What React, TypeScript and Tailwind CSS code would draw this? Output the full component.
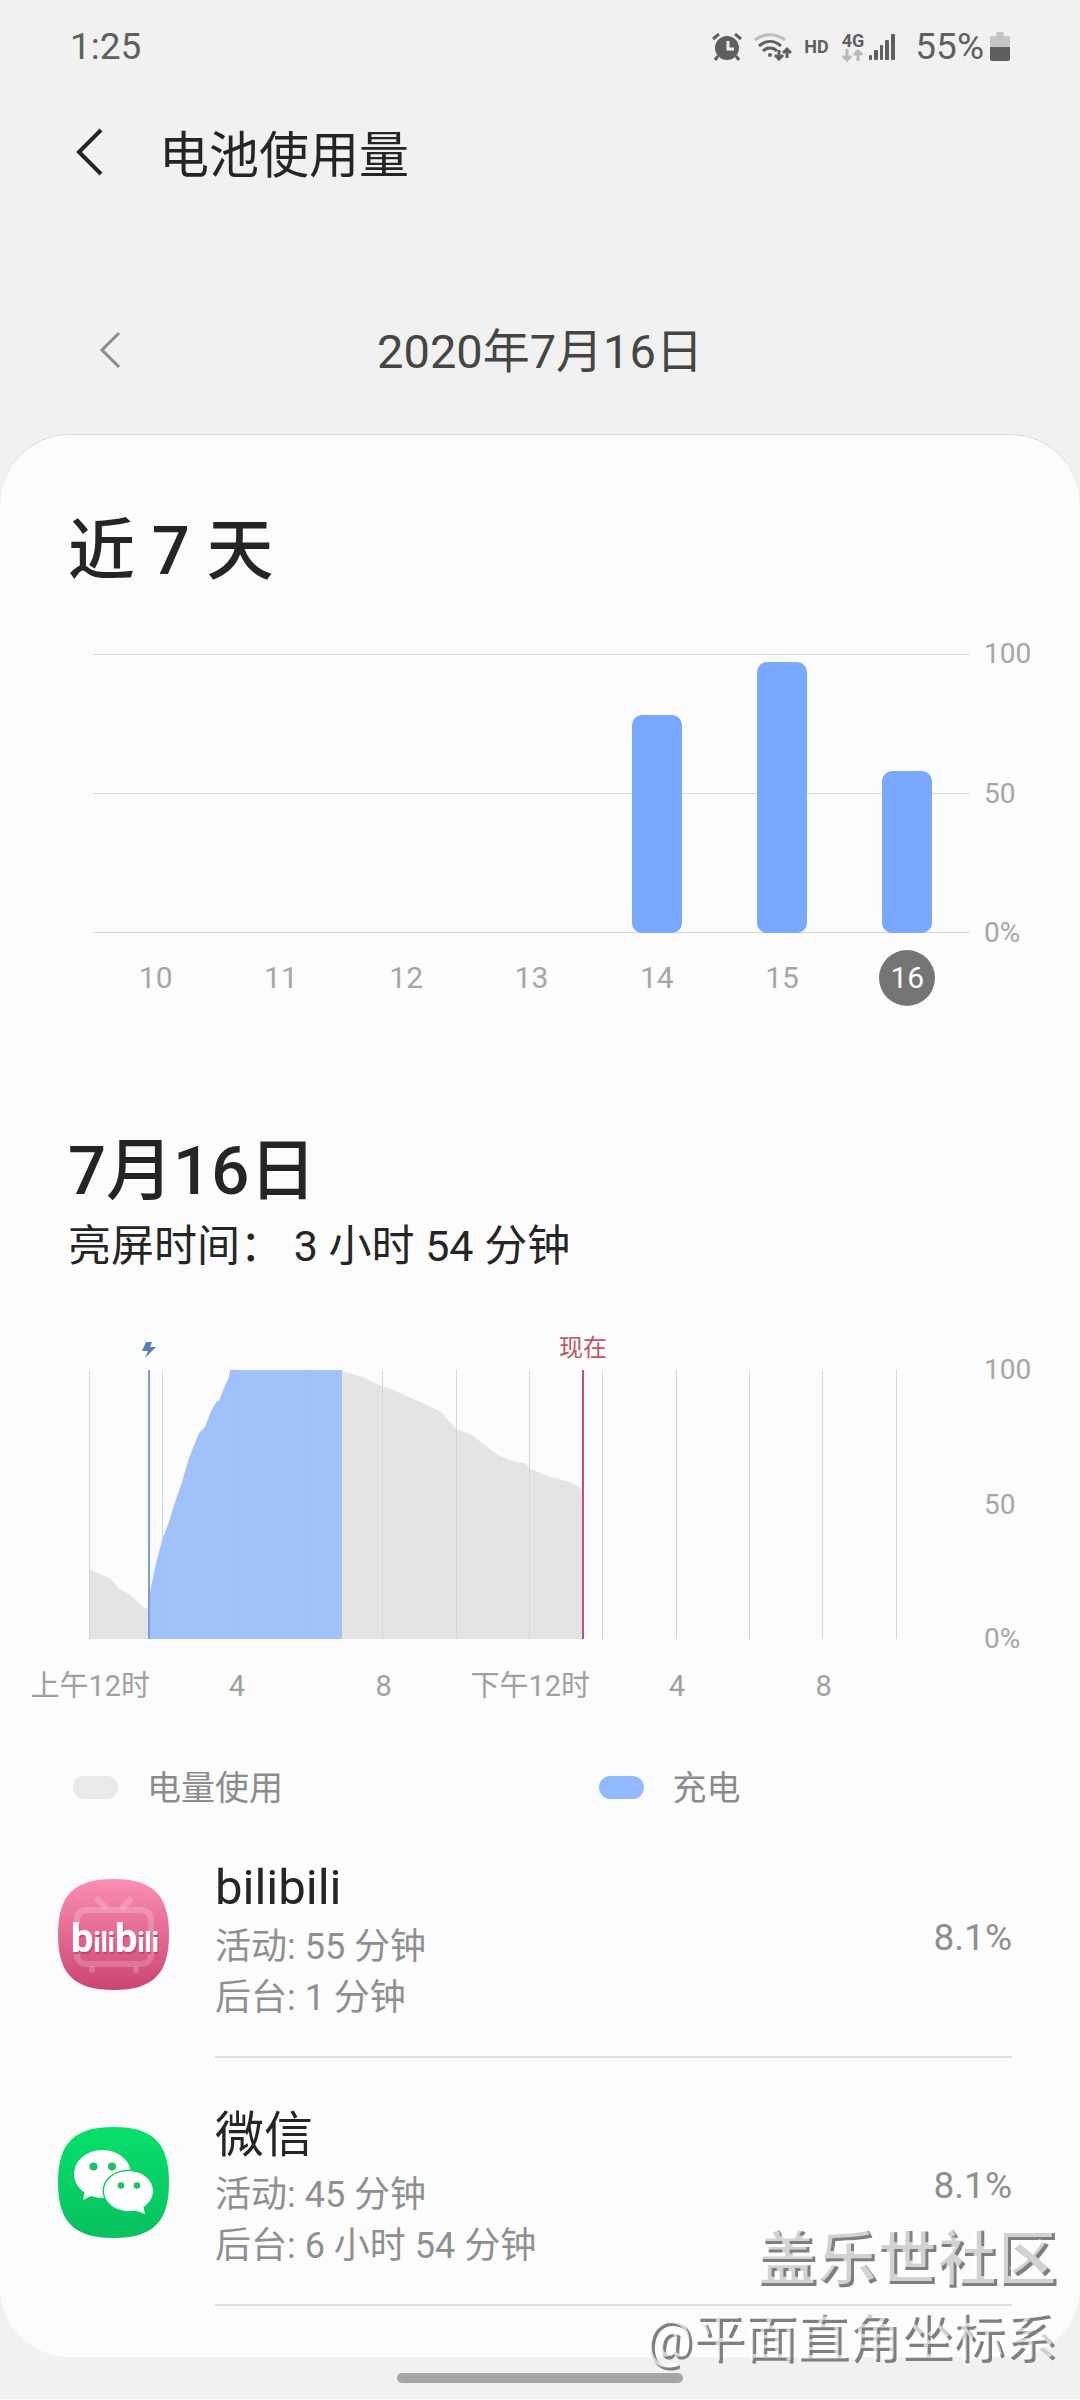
import { useState } from 'react';
import type { ReactNode } from 'react';

type Day = { day: number; level: number };

type AppUsage = {
  name: string;
  active: string;
  background: string;
  share: string;
  icon: ReactNode;
};

const DAYS: Day[] = [
  { day: 10, level: 0 },
  { day: 11, level: 0 },
  { day: 12, level: 0 },
  { day: 13, level: 0 },
  { day: 14, level: 78 },
  { day: 15, level: 97 },
  { day: 16, level: 58 },
];

const HOURS = ['上午12时', '4', '8', '下午12时', '4', '8'];

// x positions on the 880 wide day chart
const CHART_W = 880;
const CHART_H = 269;
const CHARGE_X = 60;
const NOW_X = 494;

const DRAIN_NIGHT = '0,199 22,209 29,218 41,225 51,234 55,238 60,239 60,269 0,269';
const CHARGE =
  '60,237 61,222 67,193 74,167 80,152 85,135 93,112 95,105 100,88 110,63 116,57 122,41 128,31 130,31 134,20 140,7 141,0 253,0 253,269 60,269';
const DRAIN_DAY =
  '253,1 274,7 294,17 302,19 322,28 340,36 352,42 367,59 383,65 393,73 409,85 423,91 436,93 441,99 462,107 480,112 490,117 494,121 494,269 253,269';

export default function BatteryUsagePage() {
  const [selected, setSelected] = useState(16);

  return (
    <div className="relative bg-[#f1f1f1] font-['Roboto','Noto_Sans_CJK_SC',sans-serif] text-[#252525]">
      <StatusBar />

      <header className="flex h-[124px] items-center">
        <button aria-label="返回" className="ml-[64px] mr-[47px] h-14 w-12">
          <svg viewBox="0 0 48 56" className="h-14 w-12" fill="none" stroke="#252525" strokeWidth="4">
            <path d="M37 2 15 24l22 22" />
          </svg>
        </button>
        <h1 className="text-[50px] leading-[60px]">电池使用量</h1>
      </header>

      <div className="grid grid-cols-[1fr_auto_1fr] items-center pb-[50px] pt-[102px]">
        <button aria-label="前一天" className="ml-[88px] h-12 w-12">
          <svg viewBox="0 0 48 48" className="h-12 w-12" fill="none" stroke="#8c8c8c" strokeWidth="3">
            <path d="M31 5 14 22l17 17" />
          </svg>
        </button>
        <div className="text-[47px] leading-[64px] text-[#454545]">2020年7月16日</div>
      </div>

      <main className="rounded-[70px] border-t border-[#d8d8d8] bg-[#fcfcfc] pb-[51px] pt-[76px]">
        <h2 className="px-[68px] text-[67px] font-medium leading-[80px]">近 7 天</h2>
        <WeekChart selected={selected} onSelect={setSelected} />

        <h2 className="mt-[125px] px-[68px] text-[67px] font-medium leading-[80px]">7月16日</h2>
        <p className="mt-[5px] px-[68px] text-[43px] leading-[60px]">亮屏时间： 3 小时 54 分钟</p>
        <DayChart />

        <div className="mt-[56px] grid h-12 grid-cols-2 items-center pl-[73px] text-[34px] leading-[48px] text-[#8c8c8c]">
          <div className="flex items-center gap-[29px]">
            <span className="h-[23px] w-[45px] rounded-full bg-[#e9e9e9]" />
            <span className="pt-[2px]">电量使用</span>
          </div>
          <div className="flex items-center gap-[29px] pl-[22px]">
            <span className="h-[23px] w-[45px] rounded-full bg-[#93baff]" />
            <span className="pt-[2px]">充电</span>
          </div>
        </div>

        <ul>
          {APPS.map((app) => (
            <li key={app.name} className="flex items-start pl-[58px] pr-[68px] pt-12">
              <div className="mt-[21px] h-[111px] w-[111px]">{app.icon}</div>
              <div className="ml-[46px] flex flex-1 items-start justify-between border-b-2 border-[#dedede] pb-[32px]">
                <div>
                  <div className="mb-[4px] text-[49px] leading-[60px]">{app.name}</div>
                  <div className="text-[36px] leading-[51px] text-[#8f8f8f]">活动: {app.active}</div>
                  <div className="text-[36px] leading-[51px] text-[#8f8f8f]">后台: {app.background}</div>
                </div>
                <div className="mt-[54px] text-[37px] leading-[51px] text-[#8f8f8f]">{app.share}</div>
              </div>
            </li>
          ))}
        </ul>
      </main>

      {/* Gesture bar */}
      <div className="flex justify-center py-4">
        <div className="h-[10px] w-[286px] rounded-full bg-[#a6a6a6]" />
      </div>

      {/* Watermark */}
      <div className="pointer-events-none absolute bottom-[20px] right-[24px] text-right leading-[80px] text-white/65 [text-shadow:3px_3px_0_#7f7f7f]">
        <div className="text-[60px] font-bold">盖乐世社区</div>
        <div className="text-[52px]">@平面直角坐标系</div>
      </div>
    </div>
  );
}

function StatusBar() {
  return (
    <div className="flex h-[94px] items-center justify-between pl-[70px] pr-[70px] text-[37px] leading-[44px] text-[#5f5f5f]">
      <span>1:25</span>
      <div className="flex items-center">
        {/* Alarm */}
        <svg viewBox="0 0 30 28" className="mr-[12px] h-7 w-[30px]" fill="none" stroke="#5f5f5f">
          <circle cx="15" cy="15" r="12" fill="#5f5f5f" stroke="none" />
          <path d="M1 6 7 1M29 6l-6-5M6 23l-3 4M24 23l3 4" strokeWidth="3" />
          <path d="M16 8v8h6" stroke="#f1f1f1" strokeWidth="3" />
        </svg>
        {/* Wi-Fi */}
        <svg viewBox="0 0 38 28" className="mr-[12px] h-7 w-[38px]" fill="none" strokeWidth="3">
          <path d="M1 7c9-7 21-7 30 0" stroke="#bdbdbd" />
          <path d="M5 13c7-6 15-6 22 0M9 18c4-4 10-4 14 0" stroke="#5f5f5f" />
          <circle cx="16" cy="22" r="2" fill="#5f5f5f" />
          <path
            d="M25 17v9M21 22l4 4 4-4M33 25v-9M29 20l4-4 4 4"
            stroke="#5f5f5f"
            strokeWidth="3"
          />
        </svg>
        <span className="mr-[13px] text-[18px] font-bold leading-[24px]">HD</span>
        <div className="mr-[5px] flex flex-col">
          <span className="text-[18px] font-bold leading-[16px]">4G</span>
          <svg viewBox="0 0 22 13" className="h-[13px] w-[22px]" fill="none" stroke="#b9b9b9" strokeWidth="3">
            <path d="M5 0v11M1 7l4 4 4-4M16 12V2M12 6l4-4 4 4" />
          </svg>
        </div>
        <svg viewBox="0 0 26 26" className="mr-[20px] h-[26px] w-[26px]" fill="#5f5f5f">
          <rect x="0" y="21" width="3" height="5" rx="1" />
          <rect x="5" y="16" width="4" height="10" rx="1" />
          <rect x="11" y="11" width="3" height="15" rx="1" />
          <rect x="16" y="6" width="4" height="20" rx="1" />
          <rect x="22" y="0" width="4" height="26" rx="1" />
        </svg>
        <span className="mr-[6px]">55%</span>
        <svg viewBox="0 0 20 30" className="h-[30px] w-[20px]">
          <path d="M2 4h4V2q0-2 2-2h4q2 0 2 2v2h4q2 0 2 2v10H0V6q0-2 2-2z" fill="#c4c4c4" />
          <path d="M0 15h20v12q0 2-2 2H2q-2 0-2-2z" fill="#5f5f5f" />
        </svg>
      </div>
    </div>
  );
}

function Scale() {
  return (
    <div className="-my-[14px] ml-[14px] flex w-[96px] flex-col justify-between text-[28px] leading-[28px] text-[#a6a6a6]">
      <span>100</span>
      <span>50</span>
      <span>0%</span>
    </div>
  );
}

function WeekChart({ selected, onSelect }: { selected: number; onSelect: (day: number) => void }) {
  return (
    <div className="mt-[63px] pl-[93px]">
      <div className="flex h-[279px]">
        <div className="grid flex-1">
          <div className="col-start-1 row-start-1 flex flex-col justify-between">
            <div className="h-px bg-[#d8d8d8]" />
            <div className="h-px bg-[#d8d8d8]" />
            <div className="h-px bg-[#d8d8d8]" />
          </div>
          <div className="col-start-1 row-start-1 grid grid-cols-7">
            {DAYS.map((d) => (
              <div key={d.day} className="flex items-end justify-center">
                <div className="w-[50px] rounded-[10px] bg-[#78a9ff]" style={{ height: `${d.level}%` }} />
              </div>
            ))}
          </div>
        </div>
        <Scale />
      </div>

      <div className="mr-[110px] mt-[17px] grid grid-cols-7 justify-items-center">
        {DAYS.map((d) => (
          <button
            key={d.day}
            onClick={() => onSelect(d.day)}
            className={`h-14 w-14 rounded-full text-[30px] leading-[56px] ${
              d.day === selected ? 'bg-[#757575] text-white' : 'text-[#a6a6a6]'
            }`}
          >
            {d.day}
          </button>
        ))}
      </div>
    </div>
  );
}

function DayChart() {
  return (
    <div className="mt-[56px]">
      <div className="flex pl-[89px] pt-[38px]">
        <div className="relative h-[269px] flex-1">
          <svg
            viewBox={`0 0 ${CHART_W} ${CHART_H}`}
            preserveAspectRatio="none"
            className="block h-[269px] w-full"
          >
            <polygon points={DRAIN_NIGHT} fill="#e4e4e4" />
            <polygon points={DRAIN_DAY} fill="#e4e4e4" />
            {Array.from({ length: 12 }, (_, i) => (
              <rect key={i} x={Math.round((i * CHART_W) / 12)} y="0" width="1" height={CHART_H} fill="#d6d6d6" />
            ))}
            <polygon points={CHARGE} fill="#9bbefa" fillOpacity="0.95" />
            <rect x={CHARGE_X - 1} y="0" width="2" height={CHART_H} fill="#7c9fd3" />
            <rect x={NOW_X - 1} y="0" width="2" height={CHART_H} fill="#c25469" />
          </svg>

          {/* Marker labels */}
          <svg
            viewBox="0 0 14 16"
            className="absolute -top-7 h-4 w-[14px] -translate-x-1/2"
            style={{ left: `${(CHARGE_X / CHART_W) * 100}%` }}
            fill="#5180ba"
          >
            <path d="M4 0h6L8 5h6L3 16l3-7H0z" />
          </svg>
          <span
            className="absolute -top-[38px] -translate-x-1/2 whitespace-nowrap text-[24px] leading-[32px] text-[#c25469]"
            style={{ left: `${(NOW_X / CHART_W) * 100}%` }}
          >
            现在
          </span>
        </div>
        <div className="flex w-[111px]">
          <div className="w-px" />
          <Scale />
        </div>
      </div>

      <div className="ml-[17px] mr-[183px] mt-[27px] grid grid-cols-6 text-center text-[29px] leading-[40px] text-[#a0a0a0]">
        {HOURS.map((h, i) => (
          <span key={i} className="whitespace-nowrap">
            {h}
          </span>
        ))}
      </div>
    </div>
  );
}

function BilibiliIcon() {
  return (
    <svg viewBox="0 0 111 111" className="h-full w-full">
      <defs>
        <linearGradient id="bili" x1="0" y1="0" x2="0" y2="1">
          <stop offset="0" stopColor="#fb8fb2" />
          <stop offset="1" stopColor="#cb4472" />
        </linearGradient>
      </defs>
      <path d="M55.500 0C95 0 111 16 111 55.500S95 111 55.500 111 0 95 0 55.500 16 0 55.500 0z" fill="url(#bili)" />
      <g fill="none" stroke="#ffffff" strokeOpacity="0.2" strokeWidth="6" strokeLinecap="round">
        <rect x="19" y="31" width="74" height="54" rx="9" />
        <path d="M40 21l7 7M72 21l-7 7M34 90v1M78 90v1" />
      </g>
      <g className="font-bold">
        <text x="14" y="75" fill="#a8305a" fillOpacity="0.6">
          <tspan fontSize="40">b</tspan>
          <tspan fontSize="27">ili</tspan>
          <tspan fontSize="40">b</tspan>
          <tspan fontSize="27">ili</tspan>
        </text>
        <text x="13" y="73" fill="#ffffff">
          <tspan fontSize="40">b</tspan>
          <tspan fontSize="27">ili</tspan>
          <tspan fontSize="40">b</tspan>
          <tspan fontSize="27">ili</tspan>
        </text>
      </g>
    </svg>
  );
}

function WeChatIcon() {
  return (
    <svg viewBox="0 0 111 111" className="h-full w-full">
      <defs>
        <linearGradient id="wechat" x1="0" y1="0" x2="0" y2="1">
          <stop offset="0" stopColor="#06e06c" />
          <stop offset="1" stopColor="#08c05e" />
        </linearGradient>
      </defs>
      <path d="M55.500 0C95 0 111 16 111 55.500S95 111 55.500 111 0 95 0 55.500 16 0 55.500 0z" fill="url(#wechat)" />
      <g fill="#ffffff">
        <ellipse cx="44.500" cy="47" rx="28.500" ry="24" />
        <path d="M27 63l-2 10 10-5 8-3z" />
      </g>
      <ellipse cx="70.500" cy="64" rx="26" ry="21.500" fill="#08cf65" />
      <g fill="#ffffff">
        <ellipse cx="70.500" cy="64" rx="24.500" ry="20" />
        <path d="M76 83l11 4-2-9z" />
      </g>
      <g fill="#1fbf6b">
        <circle cx="35.500" cy="39.500" r="4" />
        <circle cx="54" cy="39.500" r="4" />
        <circle cx="63" cy="58.500" r="3.300" />
        <circle cx="79" cy="58.500" r="3.300" />
      </g>
    </svg>
  );
}

const APPS: AppUsage[] = [
  { name: 'bilibili', active: '55 分钟', background: '1 分钟', share: '8.1%', icon: <BilibiliIcon /> },
  { name: '微信', active: '45 分钟', background: '6 小时 54 分钟', share: '8.1%', icon: <WeChatIcon /> },
];
